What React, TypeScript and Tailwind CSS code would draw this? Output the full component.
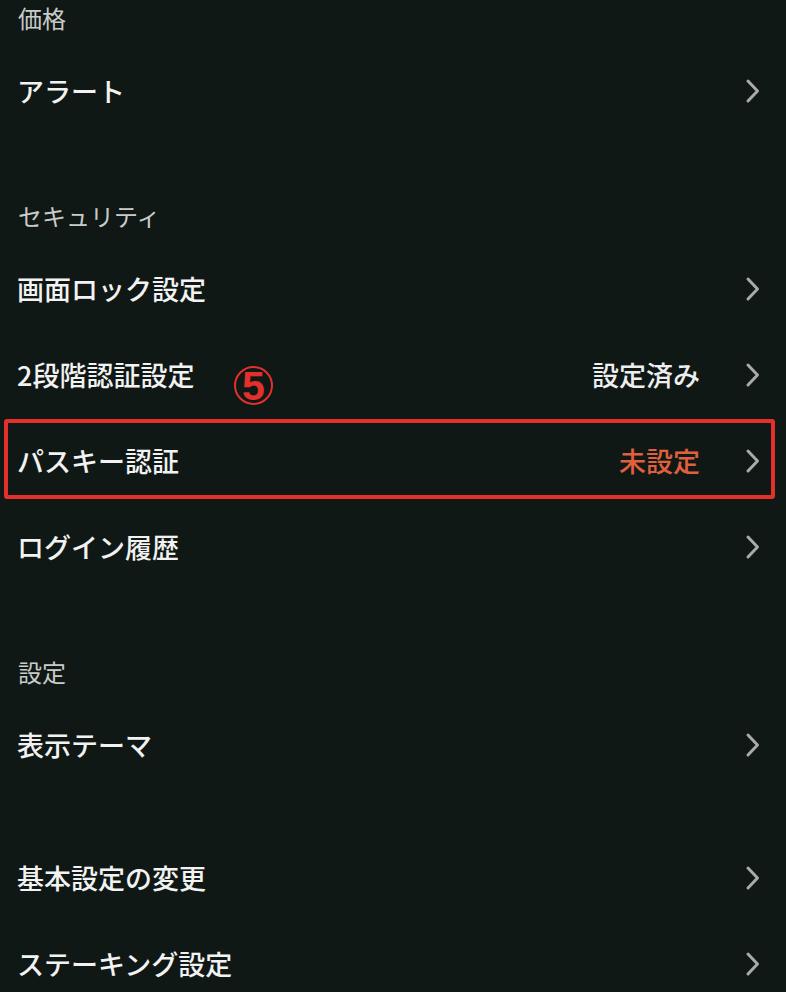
import { FC, ReactNode } from 'react'

const Chevron: FC = () => (
  <svg width="16" height="26" viewBox="0 0 16 26" fill="none" className="shrink-0">
    <path d="M3 3 L12.5 13 L3 23" stroke="#a9abaa" strokeWidth="3" strokeLinecap="round" strokeLinejoin="round" />
  </svg>
)

const Header: FC<{ label: string }> = ({ label }) => (
  <div className="h-[48px] pl-[18px] pt-[2px] text-[24px] leading-[32px] text-[#c9cbca]">{label}</div>
)

interface RowProps {
  label: string
  value?: string
  valueClass?: string
  children?: ReactNode
}

const Row: FC<RowProps> = ({ label, value, valueClass = 'text-[#eeeeee]', children }) => (
  <div className="relative flex h-[86px] items-center pl-[17px] pr-[25px]">
    <span className="flex-1 text-[27px] font-medium text-[#f1f2f1]">{label}</span>
    {value && <span className={`mr-[45px] text-[27px] font-medium ${valueClass}`}>{value}</span>}
    <Chevron />
    {children}
  </div>
)

export default function App() {
  return (
    <div
      className="h-[992px] w-[786px] overflow-hidden bg-[#101816]"
      style={{ fontFamily: '"Noto Sans CJK JP", "Noto Sans", sans-serif' }}
    >
      <Header label="価格" />
      <Row label="アラート" />
      <div className="h-[64px]" />
      <Header label="セキュリティ" />
      <Row label="画面ロック設定" />
      <Row label="2段階認証設定" value="設定済み">
        <div
          className="absolute left-[234px] top-[34px] flex h-[39px] w-[39px] items-center justify-center rounded-full border-2 border-[#e3302a] pt-[2px] text-[41px] font-bold leading-none text-[#e3302a]"
          style={{ fontFamily: '"Liberation Sans", Arial, sans-serif' }}
        >
          5
        </div>
      </Row>
      <Row label="パスキー認証" value="未設定" valueClass="text-[#e0603e]">
        <div className="absolute left-[4px] top-[1px] h-[80px] w-[771px] rounded-[3px] border-[4px] border-[#e4302a]" />
      </Row>
      <Row label="ログイン履歴" />
      <div className="h-[64px]" />
      <Header label="設定" />
      <Row label="表示テーマ" />
      <div className="h-[47px]" />
      <Row label="基本設定の変更" />
      <Row label="ステーキング設定" />
    </div>
  )
}
